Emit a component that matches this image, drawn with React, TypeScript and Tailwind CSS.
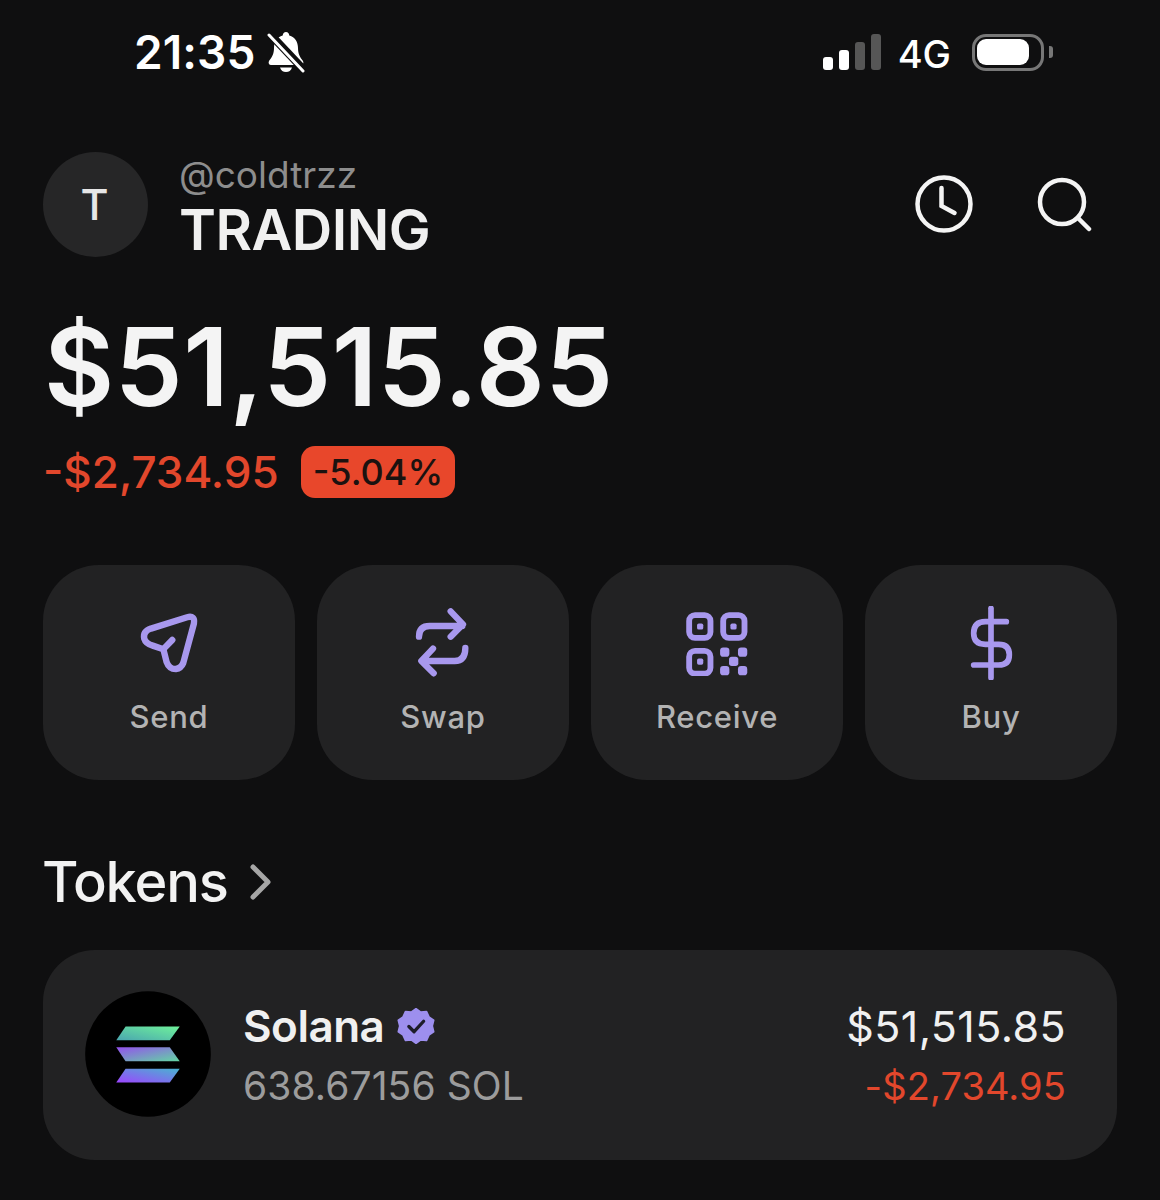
const FONT = "font-['Inter','Liberation_Sans',sans-serif]";

function BellSlash() {
  return (
    <svg width="38" height="42" viewBox="0 0 38 42" className="ml-[12px]">
      <path
        d="M19 1c2 0 3 1.500 3.300 3.500C28 6 31 11 31 17c0 6 2 9 5 13 1 2 0 4-2 4H4c-2 0-3-2-2-4 3-4 5-7 5-13 0-6 3-11 8.700-12.500C16 2.500 17 1 19 1z"
        fill="#fff"
      />
      <path d="M13 36.500h12c-1 3-3 4.500-6 4.500s-5-1.500-6-4.500z" fill="#fff" />
      <path d="M3 3l34 36" stroke="#0f0f10" strokeWidth="8" />
      <path d="M2 4l34 36" stroke="#fff" strokeWidth="3" strokeLinecap="round" />
    </svg>
  );
}

function StatusBar() {
  return (
    <div className="flex h-[104px] items-center justify-between pl-[134px] pr-[107px]">
      <div className="flex items-center">
        <span className="text-[46px] leading-none font-semibold tracking-[0.1px] text-white">21:35</span>
        <BellSlash />
      </div>
      <div className="flex items-center">
        <div className="flex items-end gap-[6px] pb-[1px]">
          <div className="h-[13px] w-[10px] rounded-[3px] bg-white" />
          <div className="h-[20px] w-[10px] rounded-[3px] bg-white" />
          <div className="h-[28px] w-[10px] rounded-[3px] bg-[#565656]" />
          <div className="h-[36px] w-[10px] rounded-[3px] bg-[#565656]" />
        </div>
        <span className="ml-[17px] pt-[3px] text-[38px] leading-none font-medium text-white">4G</span>
        <div className="ml-[21px] flex h-[37px] w-[72px] items-center rounded-[14px] border-[3px] border-[#777] pl-[2px]">
          <div className="h-[26px] w-[52px] rounded-[9px] bg-white" />
        </div>
        <div className="ml-[5px] h-[12px] w-[4px] rounded-r-[3px] bg-[#777]" />
      </div>
    </div>
  );
}

function Header() {
  return (
    <div className="mt-[48px] flex h-[105px] items-start justify-between pr-[25px]">
      <div className="flex items-start gap-[33px]">
        <div className="flex h-[105px] w-[105px] items-center justify-center rounded-full bg-[#262627] pr-[2px] text-[43px] font-medium text-[#e6e6e6]">
          T
        </div>
        <div className="-ml-[2px] flex flex-col">
          <span className="text-[37px] leading-[46px] text-[#8d8d8d]">@coldtrzz</span>
          <span className="text-[56px] leading-[64px] font-semibold tracking-[-0.5px] text-[#f0f0f0]">TRADING</span>
        </div>
      </div>
      <div className="flex items-center gap-[62px] pt-[22px]">
        <svg width="60" height="60" viewBox="0 0 60 60" fill="none" stroke="#f4f4f4" strokeLinecap="round" strokeWidth="4.500">
          <circle cx="30" cy="30" r="26.500" />
          <path d="M27.500 14v18l13 7" />
        </svg>
        <svg width="56" height="56" viewBox="0 0 56 56" fill="none" stroke="#f4f4f4" strokeLinecap="round" strokeWidth="4.500">
          <circle cx="26" cy="26" r="22" />
          <path d="M42 42l11 11" />
        </svg>
      </div>
    </div>
  );
}

function SendIcon() {
  return (
    <svg width="66" height="66" viewBox="300 180 186 186" fill="none" stroke="#a898ee" strokeWidth="18" strokeLinecap="round" strokeLinejoin="round" className="-mt-[5px] -ml-[2px]">
      <path d="M447 206L345 238Q322 246 326 266Q330 280 350 286L380 296L389 332Q396 352 415 352Q430 350 436 335L466 224Q470 200 447 206Z" />
      <path d="M380 296L405 270" />
    </svg>
  );
}

function SwapIcon() {
  return (
    <svg width="62" height="74" viewBox="1090 170 186 222" fill="none" stroke="#a898ee" strokeWidth="19" strokeLinecap="round" strokeLinejoin="round" className="ml-[2px]">
      <path d="M1108 262Q1108 230 1140 230H1238M1203 186L1240 225L1203 262" />
      <path d="M1247 296Q1247 335 1215 335H1118M1150 298L1115 335L1152 372" />
    </svg>
  );
}

function QrIcon() {
  return (
    <svg width="66" height="66" viewBox="295 180 192 192" fill="none" stroke="#a898ee" strokeWidth="17" className="-mt-[1px]">
      <rect x="310" y="195" width="62" height="66" rx="17" />
      <rect x="409" y="195" width="62" height="66" rx="17" />
      <rect x="310" y="299" width="62" height="66" rx="17" />
      <g fill="#a898ee" stroke="none">
        <rect x="333" y="219" width="18" height="18" rx="5" />
        <rect x="430" y="219" width="18" height="18" rx="5" />
        <rect x="333" y="321" width="18" height="18" rx="5" />
        <rect x="400" y="289" width="27" height="27" rx="9" />
        <rect x="452" y="289" width="27" height="27" rx="9" />
        <rect x="426" y="316" width="27" height="27" rx="8" />
        <rect x="400" y="343" width="27" height="27" rx="9" />
        <rect x="452" y="343" width="27" height="27" rx="9" />
      </g>
    </svg>
  );
}

function DollarIcon() {
  return (
    <svg width="48" height="74" viewBox="1100 168 144 222" fill="none" stroke="#a898ee" strokeWidth="17" strokeLinecap="round" strokeLinejoin="round">
      <path d="M1172 175V383" />
      <path d="M1218 215H1155Q1120 215 1120 250Q1120 283 1155 283H1195Q1227 283 1227 314Q1227 345 1195 345H1120" />
    </svg>
  );
}

const ACTIONS = [
  { label: "Send", icon: <SendIcon /> },
  { label: "Swap", icon: <SwapIcon /> },
  { label: "Receive", icon: <QrIcon /> },
  { label: "Buy", icon: <DollarIcon /> },
];

function Actions() {
  return (
    <div className="mt-[67px] grid grid-cols-4 gap-[22px]">
      {ACTIONS.map((a) => (
        <div key={a.label} className="flex h-[215px] flex-col items-center rounded-[56px] bg-[#222223]">
          <div className="mt-[40px] flex h-[76px] items-center justify-center">{a.icon}</div>
          <span className="mt-[16px] text-[31px] leading-[40px] font-medium tracking-[0.7px] text-[#b3b3b3]">{a.label}</span>
        </div>
      ))}
    </div>
  );
}

function SolanaLogo() {
  return (
    <svg width="126" height="126" viewBox="43 32 379 378" className="-mt-[2px] shrink-0">
      <defs>
        <linearGradient id="solTop" x1="0" y1="1" x2="1" y2="0">
          <stop offset="0" stopColor="#4aa5b0" />
          <stop offset="1" stopColor="#6ff29a" />
        </linearGradient>
        <linearGradient id="solMid" x1="0" y1="0" x2="1" y2="1">
          <stop offset="0" stopColor="#9450ee" />
          <stop offset="1" stopColor="#62d6a2" />
        </linearGradient>
        <linearGradient id="solBot" x1="0" y1="1" x2="1" y2="0">
          <stop offset="0" stopColor="#9d45ff" />
          <stop offset="1" stopColor="#48b4d0" />
        </linearGradient>
      </defs>
      <circle cx="232.500" cy="221" r="189" fill="#000" />
      <path d="M165 138H328L298 180H137Z" fill="url(#solTop)" />
      <path d="M137 201H298L328 243H165Z" fill="url(#solMid)" />
      <path d="M165 265H328L298 307H137Z" fill="url(#solBot)" />
    </svg>
  );
}

function VerifiedBadge() {
  // ten pointed rosette, the scalloped edge comes from the rounded join
  return (
    <svg width="38" height="38" viewBox="0 0 40 40">
      <path
        d="M20 2l5 3.500 6-.5 2.500 5.500 5 3.500-1.500 6 1.500 6-5 3.500L31 35l-6-.5L20 38l-5-3.500-6 .5-2.500-5.500-5-3.500 1.500-6-1.500-6 5-3.500L9 5l6 .5z"
        fill="#9d8fee"
        stroke="#9d8fee"
        strokeWidth="2"
        strokeLinejoin="round"
      />
      <path d="M12.500 20.500l5.500 5.500 10-11" fill="none" stroke="#1d1d2a" strokeWidth="3.500" strokeLinecap="round" strokeLinejoin="round" />
    </svg>
  );
}

export default function App() {
  return (
    <div className={`h-[1200px] w-[1160px] overflow-hidden bg-[#0f0f10] ${FONT}`}>
      <StatusBar />
      <div className="pl-[43px] pr-[43px]">
        <Header />
        <div className="mt-[60px] pl-[1px] text-[108px] leading-[100px] font-semibold tracking-[0.500px] text-[#f4f4f4]">
          $51,515.85
        </div>
        <div className="mt-[29px] flex items-center gap-[22px]">
          <span className="text-[44px] leading-none font-medium tracking-[0px] text-[#e2472c]">-$2,734.95</span>
          <span className="flex h-[52px] items-center rounded-[14px] bg-[#e8472b] px-[12px] text-[36px] font-medium text-[#1b1210]">
            -5.04%
          </span>
        </div>
        <Actions />
        <div className="mt-[72px] -ml-[1px] flex h-[60px] items-center gap-[20px]">
          <span className="text-[56px] leading-none font-medium tracking-[-1.200px] text-[#f2f2f2]">Tokens</span>
          <svg width="24" height="36" viewBox="0 0 24 36" fill="none" stroke="#a6a6a6" strokeWidth="5" strokeLinecap="round" strokeLinejoin="round">
            <path d="M5 3l15 15L5 33" />
          </svg>
        </div>
        <div className="mt-[38px] flex h-[210px] items-center rounded-[52px] bg-[#222223] pl-[42px] pr-[51px]">
          <SolanaLogo />
          <div className="ml-[33px] -translate-x-[1px] flex flex-col pt-[2px]">
            <div className="flex h-[60px] items-center gap-[13px]">
              <span className="text-[44px] leading-none font-semibold tracking-[-0.5px] text-[#f0f0f0]">Solana</span>
              <VerifiedBadge />
            </div>
            <span className="text-[39px] leading-[60px] tracking-[0.1px] text-[#9c9c9c]">638.67156 SOL</span>
          </div>
          <div className="ml-auto flex flex-col items-end pt-[2px]">
            <span className="text-[43px] leading-[60px] tracking-[0.4px] text-[#f0f0f0]">$51,515.85</span>
            <span className="text-[38px] leading-[60px] tracking-[0.1px] text-[#e2472c]">-$2,734.95</span>
          </div>
        </div>
      </div>
    </div>
  );
}
